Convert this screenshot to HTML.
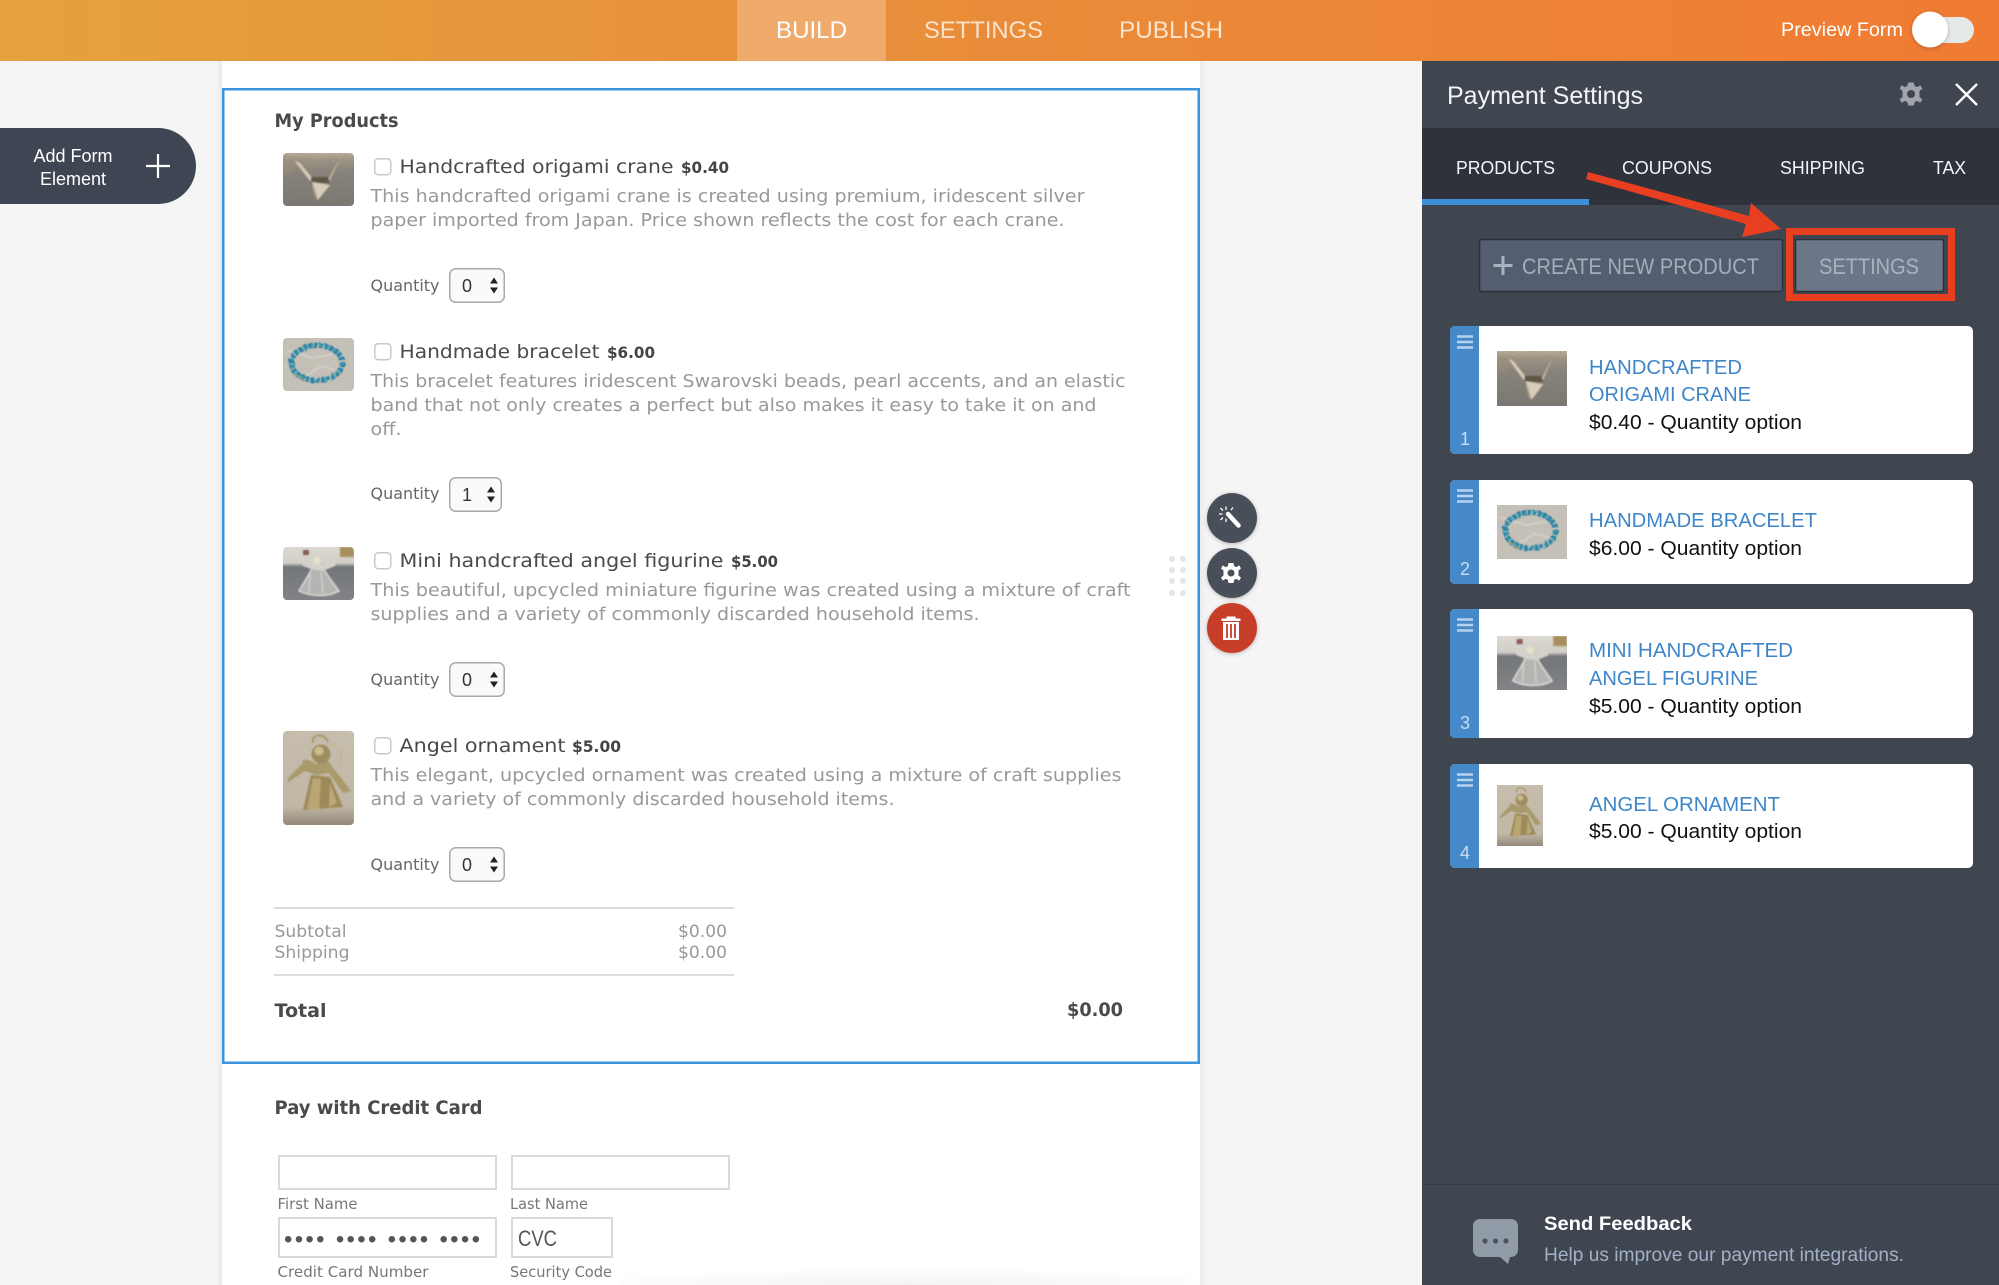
<!DOCTYPE html>
<html lang="en">
<head>
<meta charset="utf-8">
<title>Payment Settings</title>
<style>
html,body{margin:0;padding:0;width:1999px;height:1285px;overflow:hidden;background:#f5f5f5}
svg{display:block;filter:blur(.35px)}
text{white-space:pre}
.s{font-family:"Liberation Sans",sans-serif}
.f{font-family:"DejaVu Sans","Liberation Sans",sans-serif}
.t{font-size:19px;fill:#4a4a4a}
.p{font-size:16px;font-weight:bold;fill:#444}
.d{font-size:18px;fill:#999}
.q{font-size:16px;fill:#666}
.h{font-size:19px;font-weight:bold;fill:#4a4a4a}
.c{font-size:17px;fill:#999}
.l{font-size:15px;fill:#777}
.n{font-size:20px;fill:#3f86c9}
.o{font-size:20px;fill:#111}
.idx{font-size:18px;fill:#c9ddf0;text-anchor:middle}
.tab{font-size:18px;fill:#f4f5f7}
.top{font-size:24px;fill:#fbe3cc}
</style>
</head>
<body>
<svg xmlns="http://www.w3.org/2000/svg" width="1999" height="1285" viewBox="0 0 1999 1285">
<defs>
<linearGradient id="hdr" x1="0" x2="1" y1="0" y2="0">
  <stop offset="0" stop-color="#e5a23e"/><stop offset=".5" stop-color="#e98c39"/><stop offset="1" stop-color="#f07b33"/>
</linearGradient>
<linearGradient id="edgeL" x1="0" x2="1"><stop offset="0" stop-color="#f5f5f5"/><stop offset="1" stop-color="#e9e9e9"/></linearGradient>
<linearGradient id="edgeR" x1="0" x2="1"><stop offset="0" stop-color="#ececec"/><stop offset="1" stop-color="#f5f5f5"/></linearGradient>
<filter id="b1" x="-5%" y="-5%" width="110%" height="110%"><feGaussianBlur stdDeviation=".8"/></filter>
<filter id="b2" x="-5%" y="-5%" width="110%" height="110%"><feGaussianBlur stdDeviation="2"/></filter>
<filter id="noise" x="0" y="0" width="100%" height="100%">
  <feTurbulence type="fractalNoise" baseFrequency=".7" numOctaves="2" seed="3"/>
  <feColorMatrix values="0 0 0 0 .2  0 0 0 0 .2  0 0 0 0 .2  1.6 0 0 0 -.5"/>
  <feGaussianBlur stdDeviation=".3"/>
</filter>
<filter id="wob" x="-10%" y="-10%" width="120%" height="120%">
  <feTurbulence type="fractalNoise" baseFrequency=".25" numOctaves="2" seed="8"/>
  <feDisplacementMap in="SourceGraphic" scale="3.5"/>
  <feGaussianBlur stdDeviation=".5"/>
</filter>
<filter id="sh" x="-30%" y="-30%" width="160%" height="160%"><feDropShadow dx="0" dy="1" stdDeviation="2" flood-color="#000" flood-opacity=".25"/></filter>
<radialGradient id="fade" cx=".5" cy="1" r=".6"><stop offset="0" stop-color="#000" stop-opacity=".05"/><stop offset="1" stop-color="#000" stop-opacity="0"/></radialGradient>
<linearGradient id="cbg" x1="0" x2="0" y1="0" y2="1"><stop offset="0" stop-color="#c4b49d"/><stop offset=".13" stop-color="#a49885"/><stop offset=".35" stop-color="#8a857c"/><stop offset="1" stop-color="#7b7770"/></linearGradient>
<linearGradient id="gbg" x1="0" x2="0" y1="0" y2="1"><stop offset="0" stop-color="#dcd8d2"/><stop offset=".3" stop-color="#d2cec8"/><stop offset=".38" stop-color="#73767a"/><stop offset="1" stop-color="#828487"/></linearGradient>
<linearGradient id="obg" x1="0" x2="0" y1="0" y2="1"><stop offset="0" stop-color="#c9c0af"/><stop offset=".8" stop-color="#c4baa8"/><stop offset="1" stop-color="#95897a"/></linearGradient>
<symbol id="crane" viewBox="0 0 71 53" preserveAspectRatio="none">
  <rect width="71" height="53" fill="url(#cbg)"/>
  <path d="M0 8L24 5 8 18 0 22Z" fill="#a0927c" opacity=".7" filter="url(#b2)"/>
  <rect width="71" height="53" filter="url(#noise)" opacity=".55"/>
  <g filter="url(#b1)">
  <path d="M11 7L17 10 31 27 27 28Z" fill="#d6cab6"/>
  <path d="M56 8L53 12 44 28 47 28Z" fill="#bdae98"/>
  <path d="M28 24L45 24 47 30 28 30Z" fill="#5f5646"/>
  <path d="M29 29L47 32 35 47 32 44Z" fill="#d8cdb8"/>
  <path d="M30 30L35 47 32 44Z" fill="#a89a80"/>
  </g>
</symbol>
<symbol id="bracelet" viewBox="0 0 71 53" preserveAspectRatio="none">
  <rect width="71" height="53" fill="#c9c4ba"/>
  <rect width="71" height="53" filter="url(#noise)" opacity=".15"/>
  <path d="M4 12L30 20 50 16M20 40L38 28 60 34" fill="none" stroke="#e0dcd4" stroke-width="1" filter="url(#b1)"/>
  <ellipse cx="34" cy="25" rx="25.500" ry="17.500" fill="none" stroke="#2b84a3" stroke-width="5.500" stroke-dasharray="4 1.200" filter="url(#wob)"/>
  <ellipse cx="34" cy="25" rx="25.500" ry="17.500" fill="none" stroke="#44a6c0" stroke-width="2" stroke-dasharray="2 6" filter="url(#b1)"/>
  <path d="M12 36L22 43" stroke="#b0a27c" stroke-width="2" opacity=".7"/>
</symbol>
<symbol id="figurine" viewBox="0 0 71 53" preserveAspectRatio="none">
  <rect width="71" height="53" fill="url(#gbg)"/>
  <rect y="18" width="71" height="35" filter="url(#noise)" opacity=".3"/>
  <g filter="url(#b1)">
  <rect x="57" y="0" width="14" height="10" fill="#a98f60"/>
  <rect x="20" y="3" width="6" height="5" fill="#8c5b55"/>
  <path d="M29 21C25 30 19 38 16 44 28 50 46 50 56 44 50 36 44 28 40 21Z" fill="#b4b5b2" stroke="#dcdcd8" stroke-width="1.500"/>
  <path d="M17 12L30 15 40 17 54 10 52 19 40 24 28 22 20 19Z" fill="#d2d1ca"/>
  <circle cx="34" cy="14" r="4" fill="#e6e0c8"/>
  <path d="M27 27L26 45M38 25L40 46" stroke="#dcdcd8" stroke-width="1"/>
  </g>
</symbol>
<symbol id="ornament" viewBox="0 0 71 94" preserveAspectRatio="none">
  <rect width="71" height="94" fill="url(#obg)"/>
  <rect width="71" height="94" filter="url(#noise)" opacity=".12"/>
  <g filter="url(#b1)">
  <path d="M30 12C28 2 42 2 45 11" fill="none" stroke="#a99260" stroke-width="1.800"/>
  <path d="M44 14C56 14 62 24 56 34" fill="none" stroke="#c4b27e" stroke-width="1"/>
  <path d="M28 44L47 46 60 76 20 79Z" fill="#9c8a59"/>
  <path d="M30 47L38 48 36 78 24 78Z" fill="#b9a672"/>
  <path d="M47 52L54 72 46 76Z" fill="#bcaa78"/>
  <path d="M20 32C17 28 26 27 32 33L45 30 68 60 60 62 46 42 34 44 22 40 4 52 6 46Z" fill="#a99a6c"/>
  <circle cx="38" cy="23" r="9.500" fill="#9e8d5e"/>
  <circle cx="36" cy="20" r="4.500" fill="#c9bb90"/>
  </g>
</symbol>
<clipPath id="rr1"><rect x="283" y="153" width="71" height="53" rx="4"/></clipPath>
<clipPath id="rr2"><rect x="283" y="338" width="71" height="53" rx="4"/></clipPath>
<clipPath id="rr3"><rect x="283" y="547" width="71" height="53" rx="4"/></clipPath>
<clipPath id="rr4"><rect x="283" y="731" width="71" height="94" rx="4"/></clipPath>
<symbol id="sel" viewBox="0 0 55 35" preserveAspectRatio="none">
  <rect x=".75" y=".75" width="53.5" height="33.5" rx="6" fill="#fafafa" stroke="#a9a9a9" stroke-width="1.500"/>
</symbol>
</defs>

<!-- Page -->
<rect width="1999" height="1285" fill="#f5f5f5"/>
<rect x="216" y="61" width="6" height="1224" fill="url(#edgeL)"/>
<rect x="1200" y="61" width="6" height="1224" fill="url(#edgeR)"/>
<rect x="222" y="61" width="978" height="1224" fill="#fff"/>
<rect x="620" y="1255" width="580" height="30" fill="url(#fade)"/>
<rect x="223.250" y="89.250" width="975.500" height="973.500" fill="#fff" stroke="#3a94de" stroke-width="2.500"/>

<!-- Header -->
<rect width="1999" height="61" fill="url(#hdr)"/>
<rect x="737" width="149" height="61" fill="#f0ab6c"/>
<text class="s top" x="776" y="38" textLength="71" lengthAdjust="spacingAndGlyphs" style="fill:#fff">BUILD</text>
<text class="s top" x="924" y="38" textLength="119" lengthAdjust="spacingAndGlyphs">SETTINGS</text>
<text class="s top" x="1119" y="38" textLength="104" lengthAdjust="spacingAndGlyphs">PUBLISH</text>
<text class="s" x="1781" y="36" font-size="19" fill="#fff" textLength="122" lengthAdjust="spacingAndGlyphs">Preview Form</text>
<rect x="1925" y="17" width="49" height="26" rx="13" fill="#e5e9e8"/>
<circle cx="1930" cy="29.500" r="18" fill="#fff" filter="url(#sh)"/>

<!-- Add form element -->
<path d="M0 128H158a38 38 0 0 1 0 76H0Z" fill="#3f4653"/>
<text class="s" x="73" y="162" font-size="18" fill="#fff" text-anchor="middle">Add Form</text>
<text class="s" x="73" y="185" font-size="18" fill="#fff" text-anchor="middle">Element</text>
<path d="M158 154V178M146 166H170" stroke="#fff" stroke-width="2.200"/>

<!-- My products -->
<text class="f h" x="274.500" y="127" textLength="124" lengthAdjust="spacingAndGlyphs">My Products</text>

<g clip-path="url(#rr1)"><use href="#crane" x="283" y="153" width="71" height="53"/></g>
<rect x="374.750" y="158.750" width="16" height="16" rx="3.500" fill="#fff" stroke="#c9c9c9" stroke-width="1.500"/>
<text class="f t" x="399.500" y="173" textLength="274" lengthAdjust="spacingAndGlyphs">Handcrafted origami crane</text>
<text class="f p" x="681" y="173" textLength="48" lengthAdjust="spacingAndGlyphs">$0.40</text>
<text class="f d" x="370.500" y="202" textLength="714" lengthAdjust="spacingAndGlyphs">This handcrafted origami crane is created using premium, iridescent silver</text>
<text class="f d" x="370.500" y="226" textLength="694" lengthAdjust="spacingAndGlyphs">paper imported from Japan. Price shown reflects the cost for each crane.</text>
<text class="f q" x="370.500" y="291" textLength="69" lengthAdjust="spacingAndGlyphs">Quantity</text>
<use href="#sel" x="449" y="268" width="56" height="35"/>
<text class="s" x="462" y="292" font-size="18" fill="#333">0</text>
<path d="M494 277.500L498 283.500H490ZM494 293.500L498 287.500H490Z" fill="#222"/>

<g clip-path="url(#rr2)"><use href="#bracelet" x="283" y="338" width="71" height="53"/></g>
<rect x="374.750" y="343.750" width="16" height="16" rx="3.500" fill="#fff" stroke="#c9c9c9" stroke-width="1.500"/>
<text class="f t" x="399.500" y="358" textLength="200" lengthAdjust="spacingAndGlyphs">Handmade bracelet</text>
<text class="f p" x="607" y="358" textLength="48" lengthAdjust="spacingAndGlyphs">$6.00</text>
<text class="f d" x="370.500" y="387" textLength="755" lengthAdjust="spacingAndGlyphs">This bracelet features iridescent Swarovski beads, pearl accents, and an elastic</text>
<text class="f d" x="370.500" y="411" textLength="726" lengthAdjust="spacingAndGlyphs">band that not only creates a perfect but also makes it easy to take it on and</text>
<text class="f d" x="370.500" y="435" textLength="31" lengthAdjust="spacingAndGlyphs">off.</text>
<text class="f q" x="370.500" y="499" textLength="69" lengthAdjust="spacingAndGlyphs">Quantity</text>
<use href="#sel" x="449" y="477" width="53" height="35"/>
<text class="s" x="462" y="501" font-size="18" fill="#333">1</text>
<path d="M491 486.500L495 492.500H487ZM491 502.500L495 496.500H487Z" fill="#222"/>

<g clip-path="url(#rr3)"><use href="#figurine" x="283" y="547" width="71" height="53"/></g>
<rect x="374.750" y="552.750" width="16" height="16" rx="3.500" fill="#fff" stroke="#c9c9c9" stroke-width="1.500"/>
<text class="f t" x="399.500" y="567" textLength="324" lengthAdjust="spacingAndGlyphs">Mini handcrafted angel figurine</text>
<text class="f p" x="731" y="567" textLength="47" lengthAdjust="spacingAndGlyphs">$5.00</text>
<text class="f d" x="370.500" y="596" textLength="760" lengthAdjust="spacingAndGlyphs">This beautiful, upcycled miniature figurine was created using a mixture of craft</text>
<text class="f d" x="370.500" y="620" textLength="609" lengthAdjust="spacingAndGlyphs">supplies and a variety of commonly discarded household items.</text>
<text class="f q" x="370.500" y="685" textLength="69" lengthAdjust="spacingAndGlyphs">Quantity</text>
<use href="#sel" x="449" y="662" width="56" height="35"/>
<text class="s" x="462" y="686" font-size="18" fill="#333">0</text>
<path d="M494 671.500L498 677.500H490ZM494 687.500L498 681.500H490Z" fill="#222"/>

<g clip-path="url(#rr4)"><use href="#ornament" x="283" y="731" width="71" height="94"/></g>
<rect x="374.750" y="737.750" width="16" height="16" rx="3.500" fill="#fff" stroke="#c9c9c9" stroke-width="1.500"/>
<text class="f t" x="399.500" y="752" textLength="166" lengthAdjust="spacingAndGlyphs">Angel ornament</text>
<text class="f p" x="572" y="752" textLength="49" lengthAdjust="spacingAndGlyphs">$5.00</text>
<text class="f d" x="370.500" y="781" textLength="751" lengthAdjust="spacingAndGlyphs">This elegant, upcycled ornament was created using a mixture of craft supplies</text>
<text class="f d" x="370.500" y="805" textLength="524" lengthAdjust="spacingAndGlyphs">and a variety of commonly discarded household items.</text>
<text class="f q" x="370.500" y="870" textLength="69" lengthAdjust="spacingAndGlyphs">Quantity</text>
<use href="#sel" x="449" y="847" width="56" height="35"/>
<text class="s" x="462" y="871" font-size="18" fill="#333">0</text>
<path d="M494 856.500L498 862.500H490ZM494 872.500L498 866.500H490Z" fill="#222"/>

<!-- Totals -->
<rect x="274" y="907" width="460" height="2" fill="#dcdcdc"/>
<text class="f c" x="274.500" y="937" textLength="72" lengthAdjust="spacingAndGlyphs">Subtotal</text>
<text class="f c" x="678" y="937" textLength="49" lengthAdjust="spacingAndGlyphs">$0.00</text>
<text class="f c" x="274.500" y="958" textLength="75" lengthAdjust="spacingAndGlyphs">Shipping</text>
<text class="f c" x="678" y="958" textLength="49" lengthAdjust="spacingAndGlyphs">$0.00</text>
<rect x="274" y="974" width="460" height="2" fill="#dcdcdc"/>
<text class="f h" x="274.500" y="1017" textLength="52" lengthAdjust="spacingAndGlyphs">Total</text>
<text class="f h" x="1067" y="1016" textLength="56" lengthAdjust="spacingAndGlyphs">$0.00</text>

<!-- Credit card -->
<text class="f h" x="274.500" y="1114" textLength="208" lengthAdjust="spacingAndGlyphs">Pay with Credit Card</text>
<rect x="279" y="1156" width="217" height="33" fill="#fff" stroke="#dadada" stroke-width="2"/>
<rect x="512" y="1156" width="217" height="33" fill="#fff" stroke="#dadada" stroke-width="2"/>
<text class="f l" x="277.500" y="1209" textLength="80" lengthAdjust="spacingAndGlyphs">First Name</text>
<text class="f l" x="510" y="1209" textLength="78" lengthAdjust="spacingAndGlyphs">Last Name</text>
<rect x="279" y="1218" width="217" height="39" fill="#fff" stroke="#dadada" stroke-width="2"/>
<rect x="512" y="1218" width="100" height="39" fill="#fff" stroke="#dadada" stroke-width="2"/>
<text class="s" x="284" y="1247" font-size="24" fill="#555" textLength="196" lengthAdjust="spacing">•••• •••• •••• ••••</text>
<text class="s" x="518" y="1246" font-size="22" fill="#555" textLength="39" lengthAdjust="spacingAndGlyphs">CVC</text>
<text class="f l" x="277.500" y="1277" textLength="151" lengthAdjust="spacingAndGlyphs">Credit Card Number</text>
<text class="f l" x="510" y="1277" textLength="102" lengthAdjust="spacingAndGlyphs">Security Code</text>

<!-- Drag dots -->
<g fill="#e6e6e6">
<circle cx="1172" cy="559" r="3"/><circle cx="1183" cy="559" r="3"/>
<circle cx="1172" cy="570" r="3"/><circle cx="1183" cy="570" r="3"/>
<circle cx="1172" cy="581" r="3"/><circle cx="1183" cy="581" r="3"/>
<circle cx="1172" cy="593" r="3"/><circle cx="1183" cy="593" r="3"/>
</g>

<!-- Floating actions -->
<circle cx="1232" cy="518" r="25" fill="#495059" filter="url(#sh)"/>
<path d="M1228 514L1238.500 525.500" stroke="#fff" stroke-width="4.500" stroke-linecap="round"/>
<path d="M1226 506.500V510M1219 514H1222.500M1233 507.500L1231 510M1220.500 508L1223 510.500M1220.500 520L1223 517.500M1226 518.500V522" stroke="#fff" stroke-width="1.300"/>
<circle cx="1232" cy="573" r="25" fill="#495059" filter="url(#sh)"/>
<g transform="translate(1231 573)" fill="#fff">
<path d="M-2.500-10H2.500L3.200-6.800 5.400-5.900 8.200-7.600 10-4.600 7.500-2.500V2.500L10 4.600 8.200 7.600 5.400 5.900 3.200 6.800 2.500 10H-2.500L-3.200 6.800-5.400 5.900-8.200 7.600-10 4.600-7.500 2.500V-2.500L-10-4.600-8.200-7.600-5.400-5.900-3.200-6.800Z"/>
<circle r="3.500" fill="#495059"/>
</g>
<circle cx="1232" cy="628" r="25" fill="#c63d2c" filter="url(#sh)"/>
<path d="M1221.500 618.500H1240.500V621H1221.500ZM1226.500 616.500H1235.500V618.500H1226.500Z" fill="#fff"/>
<path d="M1223 622H1239V640H1223Z" fill="#fff"/>
<path d="M1227 624V638M1231 624V638M1235 624V638" stroke="#c63d2c" stroke-width="1.800"/>

<!-- Right panel -->
<rect x="1422" y="61" width="577" height="1224" fill="#3f4650"/>
<text class="s" x="1447" y="104" font-size="25" fill="#f2f3f5" textLength="196" lengthAdjust="spacingAndGlyphs">Payment Settings</text>
<g transform="translate(1911 94)" fill="#a0a5ad">
<path d="M-2.800-11.500H2.800L3.600-8 6.200-6.900 9.300-8.800 11.300-5.400 8.500-3V3L11.300 5.400 9.300 8.800 6.200 6.900 3.600 8 2.800 11.500H-2.800L-3.600 8-6.200 6.900-9.300 8.800-11.300 5.400-8.500 3V-3L-11.300-5.400-9.300-8.800-6.200-6.900-3.600-8Z"/>
<circle r="4" fill="#3f4650"/>
</g>
<path d="M1956 84L1977 105M1977 84L1956 105" stroke="#fff" stroke-width="2.400"/>
<rect x="1422" y="128" width="577" height="77" fill="#2f323b"/>
<rect x="1422" y="199" width="167" height="6" fill="#3d8fdc"/>
<text class="s tab" x="1456" y="174" textLength="99" lengthAdjust="spacingAndGlyphs">PRODUCTS</text>
<text class="s tab" x="1622" y="174" textLength="90" lengthAdjust="spacingAndGlyphs">COUPONS</text>
<text class="s tab" x="1780" y="174" textLength="85" lengthAdjust="spacingAndGlyphs">SHIPPING</text>
<text class="s tab" x="1933" y="174" textLength="33" lengthAdjust="spacingAndGlyphs">TAX</text>

<rect x="1479.500" y="239.500" width="303" height="52" rx="2" fill="#545e70" stroke="#2c3038" stroke-width="1.500"/>
<path d="M1503 256V275M1493.500 265.500H1512.500" stroke="#aab2bf" stroke-width="3"/>
<text class="s" x="1522" y="274" font-size="22" fill="#a5adba" textLength="237" lengthAdjust="spacingAndGlyphs">CREATE NEW PRODUCT</text>
<rect x="1789.500" y="231.500" width="162" height="66" fill="none" stroke="#e83f21" stroke-width="7"/>
<rect x="1795.500" y="239.500" width="148" height="52" rx="2" fill="#6b7789" stroke="#2c3038" stroke-width="1.500"/>
<text class="s" x="1819" y="274" font-size="22" fill="#aab2bf" textLength="100" lengthAdjust="spacingAndGlyphs">SETTINGS</text>
<path d="M1588 172L1749 216 1751 203 1781 229 1742 237 1746 224 1586 179Z" fill="#e83f21"/>

<!-- Cards -->
<g>
<rect x="1450" y="326" width="523" height="128" rx="5" fill="#fff"/>
<path d="M1479 326H1455a5 5 0 0 0-5 5V449a5 5 0 0 0 5 5H1479Z" fill="#4689c8"/>
<path d="M1457 336.500H1473M1457 342H1473M1457 347.500H1473" stroke="#b7d2ec" stroke-width="2.500"/>
<text class="s idx" x="1465" y="445">1</text>
<use href="#crane" x="1497" y="351" width="70" height="55"/>
<text class="s n" x="1589" y="374" textLength="153" lengthAdjust="spacingAndGlyphs">HANDCRAFTED</text>
<text class="s n" x="1589" y="401" textLength="162" lengthAdjust="spacingAndGlyphs">ORIGAMI CRANE</text>
<text class="s o" x="1589" y="429" textLength="213" lengthAdjust="spacingAndGlyphs">$0.40 - Quantity option</text>
</g>
<g>
<rect x="1450" y="480" width="523" height="104" rx="5" fill="#fff"/>
<path d="M1479 480H1455a5 5 0 0 0-5 5V579a5 5 0 0 0 5 5H1479Z" fill="#4689c8"/>
<path d="M1457 490.500H1473M1457 496H1473M1457 501.500H1473" stroke="#b7d2ec" stroke-width="2.500"/>
<text class="s idx" x="1465" y="575">2</text>
<use href="#bracelet" x="1497" y="505" width="70" height="54"/>
<text class="s n" x="1589" y="527" textLength="228" lengthAdjust="spacingAndGlyphs">HANDMADE BRACELET</text>
<text class="s o" x="1589" y="555" textLength="213" lengthAdjust="spacingAndGlyphs">$6.00 - Quantity option</text>
</g>
<g>
<rect x="1450" y="609" width="523" height="129" rx="5" fill="#fff"/>
<path d="M1479 609H1455a5 5 0 0 0-5 5V733a5 5 0 0 0 5 5H1479Z" fill="#4689c8"/>
<path d="M1457 619.500H1473M1457 625H1473M1457 630.500H1473" stroke="#b7d2ec" stroke-width="2.500"/>
<text class="s idx" x="1465" y="729">3</text>
<use href="#figurine" x="1497" y="636" width="70" height="54"/>
<text class="s n" x="1589" y="657" textLength="204" lengthAdjust="spacingAndGlyphs">MINI HANDCRAFTED</text>
<text class="s n" x="1589" y="685" textLength="169" lengthAdjust="spacingAndGlyphs">ANGEL FIGURINE</text>
<text class="s o" x="1589" y="713" textLength="213" lengthAdjust="spacingAndGlyphs">$5.00 - Quantity option</text>
</g>
<g>
<rect x="1450" y="764" width="523" height="104" rx="5" fill="#fff"/>
<path d="M1479 764H1455a5 5 0 0 0-5 5V863a5 5 0 0 0 5 5H1479Z" fill="#4689c8"/>
<path d="M1457 774.500H1473M1457 780H1473M1457 785.500H1473" stroke="#b7d2ec" stroke-width="2.500"/>
<text class="s idx" x="1465" y="859">4</text>
<use href="#ornament" x="1497" y="785" width="46" height="61"/>
<text class="s n" x="1589" y="811" textLength="191" lengthAdjust="spacingAndGlyphs">ANGEL ORNAMENT</text>
<text class="s o" x="1589" y="838" textLength="213" lengthAdjust="spacingAndGlyphs">$5.00 - Quantity option</text>
</g>

<!-- Feedback -->
<rect x="1422" y="1184" width="577" height="1" fill="#363c45"/>
<path d="M1480 1219H1511a7 7 0 0 1 7 7V1250a7 7 0 0 1-7 7H1510L1508 1264 1500 1257H1480a7 7 0 0 1-7-7V1226a7 7 0 0 1 7-7Z" fill="#929ba8"/>
<circle cx="1485" cy="1241" r="2.600" fill="#4d545f"/><circle cx="1495.500" cy="1241" r="2.600" fill="#4d545f"/><circle cx="1506" cy="1241" r="2.600" fill="#4d545f"/>
<text class="s" x="1544" y="1230" font-size="19" font-weight="bold" fill="#fff" textLength="148" lengthAdjust="spacingAndGlyphs">Send Feedback</text>
<text class="s" x="1544" y="1261" font-size="19" fill="#a3b1c7" textLength="360" lengthAdjust="spacingAndGlyphs">Help us improve our payment integrations.</text>
</svg>
</body>
</html>
